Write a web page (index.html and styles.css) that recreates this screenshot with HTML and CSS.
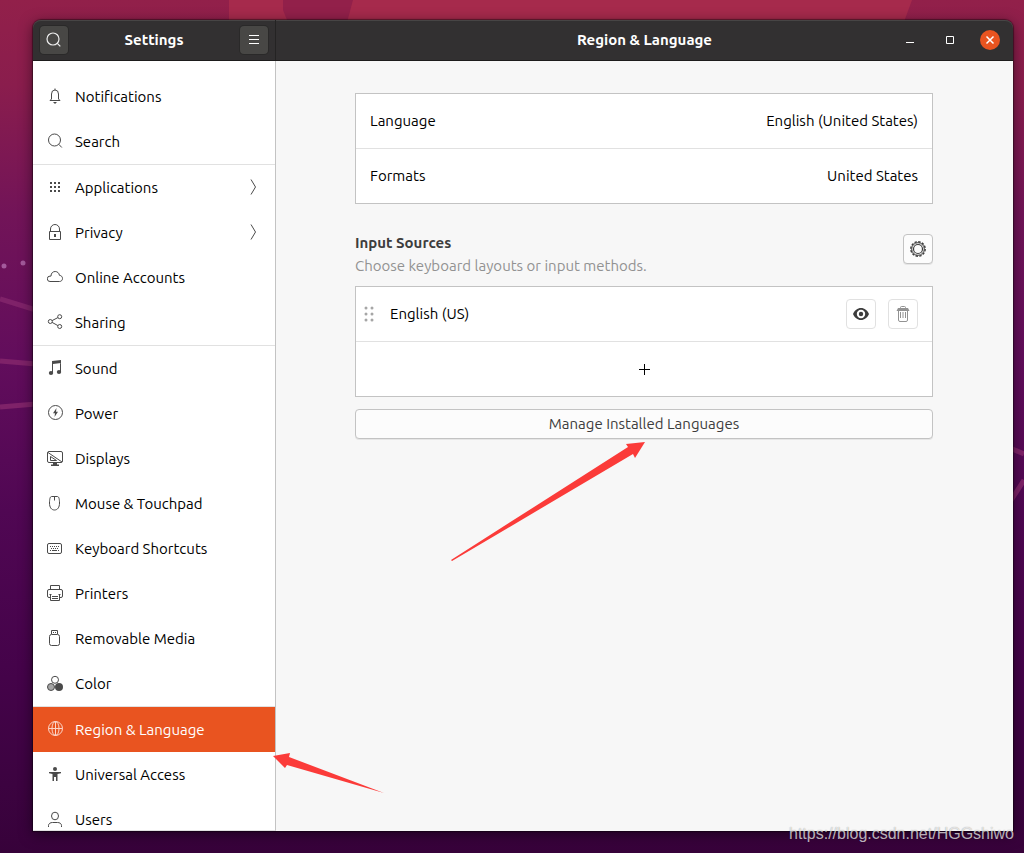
FILE: index.html
```html
<!DOCTYPE html>
<html lang="en">
<head>
<meta charset="utf-8">
<title>Settings</title>
<meta name="viewport" content="width=device-width, initial-scale=1">
<link rel="stylesheet" href="styles.css">
</head>
<body class="desktop">
<svg class="wallpaper" viewBox="0 0 1024 853" preserveAspectRatio="none" aria-hidden="true">
  <defs>
    <linearGradient id="sky" x1="0" y1="0" x2="0" y2="1">
      <stop offset="0" stop-color="#92204a"/><stop offset="0.1" stop-color="#8a1d4d"/><stop offset="0.25" stop-color="#721458"/>
      <stop offset="0.42" stop-color="#620d5c"/><stop offset="0.6" stop-color="#500753"/><stop offset="0.78" stop-color="#45034a"/>
      <stop offset="0.92" stop-color="#3c0340"/><stop offset="1" stop-color="#37023a"/>
    </linearGradient>
  </defs>
  <path fill="url(#sky)" d="M0 0h1024v853H0z"/>
  <path fill="#a62a4c" d="M229 0h683l-11 30H229z"/>
  <path fill="#92204a" d="M283 0h70l-8 30h-54l-8-20z"/>
  <g fill="none" stroke="#7f2269" stroke-width="5">
    <path d="M0 299l36 11M0 361l36 3M0 407l36-3M1010 448l14 6M1010 502l14-22"/>
  </g>
  <g fill="#a45a9c"><circle cx="4" cy="266" r="2.5"/><circle cx="23" cy="263" r="2.5"/></g>
</svg>

<main class="window">
  <header class="titlebar">
    <div class="titlebar-side">
      <button class="dark-button" aria-label="Search settings">
        <svg width="16" height="16" viewBox="0 0 16 16" fill="none" stroke="#eee" stroke-width="1.2"><circle cx="7" cy="7" r="6"/><path d="M11.300 11.300l3 3"/></svg>
      </button>
      <h1 class="title">Settings</h1>
      <button class="dark-button" aria-label="Menu">
        <svg width="16" height="16" viewBox="0 0 16 16" stroke="#fff"><path d="M3 3.500h10M3 7.500h10M3 11.500h10"/></svg>
      </button>
    </div>
    <div class="titlebar-main">
      <h2 class="title">Region &amp; Language</h2>
      <div class="window-controls">
        <button class="control" aria-label="Minimize"><svg width="20" height="20" viewBox="0 0 20 20"><path d="M6 12.500h8" stroke="#fff"/></svg></button>
        <button class="control" aria-label="Maximize"><svg width="20" height="20" viewBox="0 0 20 20"><path d="M6.500 6.500h7v7h-7z" fill="none" stroke="#fff"/></svg></button>
        <button class="control close" aria-label="Close"><svg width="20" height="20" viewBox="0 0 20 20"><path d="M6.500 6.500l7 7M13.500 6.500l-7 7" stroke="#fff" stroke-width="1.500"/></svg></button>
      </div>
    </div>
  </header>

  <div class="body">
    <nav class="sidebar" aria-label="Settings panels">
      <a class="item" href="#"><svg class="icon" viewBox="0 0 16 16"><path class="line" d="M4.500 11V6a3.500 4 0 0 1 7 0v5l1.500 1.500H3L4.500 11zM8 0.500V2"/><path d="M6 14h4l-2 2z"/></svg><span>Notifications</span></a>
      <a class="item" href="#"><svg class="icon" viewBox="0 0 16 16"><circle class="line" cx="7.500" cy="7" r="6"/><path class="line" d="M11.800 11.300l3 3.200"/></svg><span>Search</span></a>
      <hr class="separator">
      <a class="item" href="#"><svg class="icon" viewBox="0 0 16 16"><path d="M3 3h2v2H3zM7 3h2v2H7zM11 3h2v2h-2zM3 7h2v2H3zM7 7h2v2H7zM11 7h2v2h-2zM3 11h2v2H3zM7 11h2v2H7zM11 11h2v2h-2z"/></svg><span>Applications</span><svg class="icon chevron" viewBox="0 0 16 16"><path class="line" d="M6 0.500l4.500 7.500L6 15.500"/></svg></a>
      <a class="item" href="#"><svg class="icon" viewBox="0 0 16 16"><path class="line" d="M2.500 7.500h11v8h-11zM3.500 7V5a4.500 4.500 0 0 1 9 0v2"/><path d="M7 10h2v3H7z"/></svg><span>Privacy</span><svg class="icon chevron" viewBox="0 0 16 16"><path class="line" d="M6 0.500l4.500 7.500L6 15.500"/></svg></a>
      <a class="item" href="#"><svg class="icon" viewBox="0 0 16 16"><path class="line" d="M3 12.500a2.700 2.700 0 0 1 0-5.400H4C4 4 6 2.500 8.200 2.500c2.300 0 4 1.700 4.200 3.800 2 .2 3.100 1.500 3.100 3.200 0 1.800-1.300 3-3 3z"/></svg><span>Online Accounts</span></a>
      <a class="item" href="#"><svg class="icon" viewBox="0 0 16 16"><g class="line"><circle cx="12.700" cy="2.700" r="2"/><circle cx="3.300" cy="7.500" r="2"/><circle cx="12.700" cy="12.500" r="2"/><path d="M5.100 6.600l5.800-3M5.100 8.400l5.800 3.200"/></g></svg><span>Sharing</span></a>
      <hr class="separator">
      <a class="item" href="#"><svg class="icon" viewBox="0 0 16 16"><path d="M5 1l9-1v3L6 4zM5 1h1v11.500H5zM13 1h1v11h-1z"/><ellipse cx="4" cy="13" rx="2.200" ry="1.900"/><ellipse cx="12" cy="12" rx="2.200" ry="1.900"/></svg><span>Sound</span></a>
      <a class="item" href="#"><svg class="icon" viewBox="0 0 16 16"><circle class="line" cx="8.500" cy="7.500" r="7"/><path d="M9.500 3L6 8.300h2L7.500 12l3.500-5.300H9z"/></svg><span>Power</span></a>
      <a class="item" href="#"><svg class="icon" viewBox="0 0 16 16"><rect class="line" x="0.500" y="1.500" width="15" height="11" rx="1.500"/><path class="line" d="M1 2.500l14 9.500M3.500 6.500v4h6z"/><path d="M6 13h4v1.500h2V16H4v-1.500h2z"/></svg><span>Displays</span></a>
      <a class="item" href="#"><svg class="icon" viewBox="0 0 16 16"><path class="line" d="M4.500 1.500h6c1.500 0 2 3 2 6.500 0 4.500-2 7-5 7s-5-2.500-5-7c0-3.500.5-6.500 2-6.500zM7.500 1.500v4"/></svg><span>Mouse &amp; Touchpad</span></a>
      <a class="item" href="#"><svg class="icon" viewBox="0 0 16 16"><rect class="line" x="0.500" y="3.500" width="14" height="10" rx="1.500"/><path class="line" stroke-dasharray="1 1" d="M3 6.500h10M4 8.500h8"/><path class="line" d="M3 10.500h1M5 10.500h5M11 10.500h1"/></svg><span>Keyboard Shortcuts</span></a>
      <a class="item" href="#"><svg class="icon" viewBox="0 0 16 16"><path class="line" d="M3.500 4V0.500h9V4M3 12.500H2A1.500 1.500 0 0 1 .5 11V6A1.500 1.500 0 0 1 2 4.500h12A1.500 1.500 0 0 1 15.500 6v5a1.500 1.500 0 0 1-1.500 1.500h-1M3.500 9v6.500h9V9M5 11.500h6M5 13.500h6M2.500 9.500h2M11.500 9.500h2"/></svg><span>Printers</span></a>
      <a class="item" href="#"><svg class="icon" viewBox="0 0 16 16"><path class="line" d="M4.500 4V0.500h6V4M6 2.500h1M8 2.500h1"/><rect class="line" x="2.500" y="4.500" width="10" height="11" rx="2"/></svg><span>Removable Media</span></a>
      <a class="item" href="#"><svg class="icon" viewBox="0 0 16 16"><circle cx="4" cy="12" r="3.500" class="line grey"/><circle cx="12" cy="12" r="4"/><circle class="line" cx="8" cy="4.800" r="3.500"/></svg><span>Color</span></a>
      <hr class="separator">
      <a class="item selected" href="#" aria-current="page"><svg class="icon" viewBox="0 0 16 16"><g class="line"><circle cx="8.500" cy="7.500" r="7"/><ellipse cx="8.500" cy="7.500" rx="3.500" ry="7"/><path d="M8.500 0.500v14M1.500 7.500h14"/></g></svg><span>Region &amp; Language</span></a>
      <a class="item" href="#"><svg class="icon" viewBox="0 0 16 16"><circle cx="8" cy="3" r="2"/><path d="M2 6h12v1.300l-3.500.7v7H9v-4H7v4H5.500V8L2 7.300z"/></svg><span>Universal Access</span></a>
      <a class="item" href="#"><svg class="icon" viewBox="0 0 16 16"><ellipse class="line" cx="8" cy="5" rx="3.500" ry="3.800"/><path class="line" d="M1.500 16v-1.500c0-2 2-3 4-3h5c2 0 4 1 4 3V16"/></svg><span>Users</span></a>
    </nav>

    <section class="panel">
      <div class="content">
        <div class="list">
          <button class="row"><span>Language</span><span>English (United States)</span></button>
          <button class="row"><span>Formats</span><span>United States</span></button>
        </div>
        <div class="section-head">
          <div class="section-text">
            <h3 class="section-title">Input Sources</h3>
            <p class="section-note">Choose keyboard layouts or input methods.</p>
          </div>
          <button class="square" aria-label="Input source options">
            <svg width="16" height="16" viewBox="0 0 16 16" fill="none" stroke="#3d3d3d"><circle cx="8" cy="8" r="7.200" stroke-width="1.400" stroke-dasharray="2.400 1.370"/><circle cx="8" cy="8" r="6.300" stroke-width="1"/><circle cx="8" cy="8" r="4.500" stroke-width="1.200"/></svg>
          </button>
        </div>
        <div class="list">
          <div class="row source">
            <svg class="grip" width="10" height="16" viewBox="0 0 10 16" fill="#a6a6a6" aria-hidden="true"><circle cx="2" cy="2" r="1.500"/><circle cx="8" cy="2" r="1.500"/><circle cx="2" cy="8" r="1.500"/><circle cx="8" cy="8" r="1.500"/><circle cx="2" cy="14" r="1.500"/><circle cx="8" cy="14" r="1.500"/></svg>
            <span class="source-name">English (US)</span>
            <button class="square flat" aria-label="Show keyboard layout">
              <svg width="16" height="16" viewBox="0 0 16 16"><path fill="#3d3d3d" fill-rule="evenodd" d="M8 2c3.500 0 6.500 2.500 8 6-1.500 3.500-4.500 6-8 6S1.500 11.500 0 8c1.500-3.500 4.500-6 8-6zm0 1.800a4.200 4.200 0 1 0 0 8.400 4.200 4.200 0 0 0 0-8.400z"/><circle cx="8" cy="8" r="2.200" fill="#3d3d3d"/></svg>
            </button>
            <button class="square flat" aria-label="Remove input source" disabled>
              <svg width="16" height="16" viewBox="0 0 16 16" fill="none" stroke="#929292"><path d="M5.500 2.500v-1a1 1 0 0 1 1-1h3a1 1 0 0 1 1 1v1M3.500 5v9a1.500 1.500 0 0 0 1.500 1.500h6a1.500 1.500 0 0 0 1.500-1.500V5M5.500 6v6M8 6v6M10.500 6v6"/><path fill="#929292" stroke="none" d="M3 2h10l1.500 3h-13z"/></svg>
            </button>
          </div>
          <button class="row add" aria-label="Add input source"><svg width="11" height="11" viewBox="0 0 11 11" stroke="#000"><path d="M0 5.500h11M5.500 0v11"/></svg></button>
        </div>
        <button class="manage">Manage Installed Languages</button>
      </div>
    </section>
  </div>
</main>

<svg class="annotations" viewBox="0 0 1024 853" aria-hidden="true" fill="#fb3b39">
  <path d="M645 442l-19 2 2 3L451 560l1 1 181-107 2 4z"/>
  <path d="M273 756l17-3-1 4 95 36-97-28-2 3z"/>
</svg>
<p class="watermark">https://blog.csdn.net/HGGshiwo</p>
</body>
</html>
```

FILE: styles.css
```css
* {
  box-sizing: border-box;
}

.desktop {
  position: relative;
  height: 100vh;
  margin: 0;
  padding: 20px 11px 22px 33px;
  overflow: hidden;
  font: 15px/18px Ubuntu, "Noto Sans", sans-serif;
  color: #000;
  background: #37023a;
}

h1, h2, h3, p {
  margin: 0;
}

button {
  padding: 0;
  border: 0;
  font: inherit;
  color: inherit;
  background: none;
}

svg {
  display: block;
  flex: none;
}

.wallpaper {
  position: absolute;
  inset: 0;
  width: 100%;
  height: 100%;
}

.window {
  position: relative;
  display: flex;
  flex-direction: column;
  height: 100%;
  border-radius: 8px 8px 0 0;
  box-shadow: 0 0 1px 1px rgba(0, 0, 0, 0.4), 0 3px 14px rgba(0, 0, 0, 0.5);
}

.titlebar {
  display: flex;
  height: 41px;
  flex: none;
  color: #fff;
  background: #323031;
  border-bottom: 1px solid #1d1c1c;
  border-radius: 8px 8px 0 0;
  box-shadow: inset 0 1px #474545;
}

.titlebar-side {
  display: flex;
  align-items: center;
  justify-content: space-between;
  width: 243px;
  padding: 0 7px;
  border-right: 1px solid #242323;
}

.titlebar-main {
  display: grid;
  grid-template-columns: 1fr auto 1fr;
  align-items: center;
  flex: 1;
  padding: 0 13px;
}

.titlebar-main .title {
  grid-column: 2;
}

.title {
  font-size: 15px;
  font-weight: 700;
}

.dark-button {
  display: grid;
  place-items: center;
  width: 28px;
  height: 28px;
  background: #484745;
  border-radius: 4px;
  box-shadow: 0 0 0 1px #2a2929;
}

.window-controls {
  display: flex;
  justify-content: flex-end;
  gap: 20px;
}

.control {
  width: 20px;
  height: 20px;
  border-radius: 50%;
}

.close {
  background: #e95420;
}

.body {
  display: flex;
  flex: 1;
  min-height: 0;
}

.sidebar {
  width: 243px;
  flex: none;
  padding-top: 13px;
  overflow: hidden;
  background: #fff;
  border-right: 1px solid #c3c3c3;
  border-bottom: 1px solid #e1e1e1;
}

.item {
  display: flex;
  align-items: center;
  gap: 12px;
  height: 45px;
  padding: 0 14px;
  color: #000;
  text-decoration: none;
}

.separator {
  height: 1px;
  margin: 0;
  border: 0;
  background: #e1e1e1;
}

.selected {
  color: #fff;
  background: #e95420;
}

.icon {
  width: 16px;
  height: 16px;
  margin-bottom: 1px;
  fill: #4a4a4a;
}

.line {
  fill: none;
  stroke: #4a4a4a;
}

.grey {
  fill: #a5a5a5;
}

.selected .line {
  stroke: #fbd5c8;
}

.chevron {
  margin-left: auto;
}

.panel {
  flex: 1;
  padding: 32px 80px 32px 79px;
  background: #f7f7f7;
}

.content {
  display: flex;
  flex-direction: column;
}

.list {
  background: #fff;
  border: 1px solid #c3c3c3;
}

.row {
  display: flex;
  align-items: center;
  justify-content: space-between;
  width: 100%;
  height: 54px;
  padding: 0 14px;
}

.row + .row {
  height: 55px;
  border-top: 1px solid #e1e1e1;
}

.section-head {
  display: flex;
  align-items: flex-start;
  justify-content: space-between;
  padding: 30px 0 11px;
}

.section-text {
  display: grid;
  gap: 5px;
}

.section-title {
  font-size: 15px;
  font-weight: 700;
  color: #3d3d3d;
}

.section-note {
  color: #929292;
}

.square {
  display: grid;
  place-items: center;
  width: 30px;
  height: 30px;
  background: #fcfcfc;
  border: 1px solid #c3c3c3;
  border-radius: 4px;
  box-shadow: 0 1px #e6e6e6;
}

.flat {
  background: #fff;
  border-color: #e1e1e1;
  box-shadow: none;
}

.source {
  gap: 12px;
  padding-left: 8px;
}

.source-name {
  flex: 1;
  padding-left: 4px;
}

.add {
  justify-content: center;
}

.manage {
  height: 30px;
  margin-top: 12px;
  color: #3d3d3d;
  background: #fcfcfc;
  border: 1px solid #c3c3c3;
  border-radius: 4px;
  box-shadow: 0 1px #e6e6e6;
}

.annotations {
  position: absolute;
  top: 0;
  left: 0;
  width: 1024px;
  height: 853px;
  pointer-events: none;
}

.watermark {
  position: absolute;
  right: 10px;
  bottom: 10px;
  font: 16px/18px "Liberation Sans", Arial, sans-serif;
  color: rgba(255, 255, 255, 0.7);
  text-shadow: 0 0 1px rgba(0, 0, 0, 0.4);
}
```
